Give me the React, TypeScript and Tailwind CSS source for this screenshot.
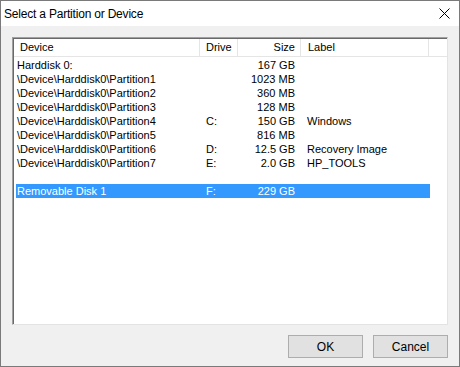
import React from "react";

const rows: { dev: string; drive: string; size: string; label: string; sel?: boolean }[] = [
  { dev: "Harddisk 0:", drive: "", size: "167 GB", label: "" },
  { dev: "\\Device\\Harddisk0\\Partition1", drive: "", size: "1023 MB", label: "" },
  { dev: "\\Device\\Harddisk0\\Partition2", drive: "", size: "360 MB", label: "" },
  { dev: "\\Device\\Harddisk0\\Partition3", drive: "", size: "128 MB", label: "" },
  { dev: "\\Device\\Harddisk0\\Partition4", drive: "C:", size: "150 GB", label: "Windows" },
  { dev: "\\Device\\Harddisk0\\Partition5", drive: "", size: "816 MB", label: "" },
  { dev: "\\Device\\Harddisk0\\Partition6", drive: "D:", size: "12.5 GB", label: "Recovery Image" },
  { dev: "\\Device\\Harddisk0\\Partition7", drive: "E:", size: "2.0 GB", label: "HP_TOOLS" },
  { dev: "", drive: "", size: "", label: "" },
  { dev: "Removable Disk 1", drive: "F:", size: "229 GB", label: "", sel: true },
];

export default function App() {
  return (
    <div
      className="w-[460px] h-[367px] border border-[#7a7a7a] flex flex-col bg-[#f0f0f0] text-black"
      style={{ fontFamily: '"Liberation Sans", Arial, sans-serif' }}
    >
      <div className="h-[25px] bg-white flex items-center justify-between pl-[3px] pr-[9px] shrink-0">
        <span className="text-[12px] leading-none tracking-[-0.2px]">
          Select a Partition or Device
        </span>
        <svg width="11" height="11" viewBox="0 0 11 11" className="block">
          <path d="M0.5 0.5 L10.5 10.5 M10.5 0.5 L0.5 10.5" stroke="#000" strokeWidth="1" fill="none" />
        </svg>
      </div>
      <div className="flex-1 flex flex-col px-[11px] pt-[11px] pb-[7px]">
        <div className="h-[288px] border border-t-[#a0a0a0] border-l-[#a0a0a0] border-r-[#e3e3e3] border-b-[#e3e3e3]">
          <div className="h-full bg-white border-t border-l border-t-[#696969] border-l-[#696969] overflow-hidden">
            <div className="h-[18px] grid grid-cols-[186px_38px_63px_128px_1fr] text-[11px] leading-[17px] border-b border-[#e5e5e5]">
              <div className="pl-[6px] border-r border-[#e5e5e5]">Device</div>
              <div className="pl-[6px] border-r border-[#e5e5e5]">Drive</div>
              <div className="pr-[5px] text-right border-r border-[#e5e5e5]">Size</div>
              <div className="pl-[7px] border-r border-[#e5e5e5]">Label</div>
              <div />
            </div>
            <div className="flex flex-col pt-[1px]">
              {rows.map((r, i) => (
                <div
                  key={i}
                  className={
                    "ml-[2px] w-[414px] h-[14px] grid grid-cols-[183px_38px_63px_130px] text-[11px] leading-[14px] whitespace-nowrap " +
                    (r.sel ? "bg-[#3399ff] text-white" : "")
                  }
                >
                  <div className="pl-[1px]">{r.dev}</div>
                  <div className="pl-[7px]">{r.drive}</div>
                  <div className="pr-[5px] text-right">{r.size}</div>
                  <div className="pl-[7px]">{r.label}</div>
                </div>
              ))}
            </div>
          </div>
        </div>
        <div className="flex justify-end gap-[10px] mt-[10px]">
          {["OK", "Cancel"].map((t) => (
            <button
              key={t}
              className="w-[75px] h-[23px] bg-[#e1e1e1] border border-[#adadad] text-[12px] leading-none"
              style={{ fontFamily: '"Liberation Sans", Arial, sans-serif' }}
            >
              {t}
            </button>
          ))}
        </div>
      </div>
    </div>
  );
}
